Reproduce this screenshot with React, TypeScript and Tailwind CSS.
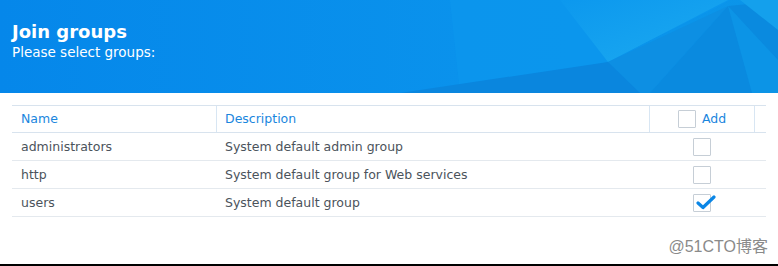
import React from 'react';

interface Group {
  name: string;
  description: string;
  checked: boolean;
}

const GROUPS: Group[] = [
  { name: 'administrators', description: 'System default admin group', checked: false },
  { name: 'http', description: 'System default group for Web services', checked: false },
  { name: 'users', description: 'System default group', checked: true },
];

const COLS = 'grid grid-cols-[204px_433px_106px_16px]';

// background art for the banner
const BannerArt: React.FC = () => (
  <svg className="absolute inset-0" width="778" height="93" viewBox="0 0 778 93" preserveAspectRatio="none">
    <defs>
      <linearGradient id="base" x1="0" y1="0" x2="1" y2="0">
        <stop offset="0" stopColor="#0587ea" />
        <stop offset="0.6" stopColor="#0a92ec" />
        <stop offset="1" stopColor="#0b95e9" />
      </linearGradient>
      <linearGradient id="light" x1="0" y1="0" x2="1" y2="1">
        <stop offset="0" stopColor="#0c98ee" />
        <stop offset="1" stopColor="#1caaf0" />
      </linearGradient>
    </defs>
    <rect width="778" height="93" fill="url(#base)" />
    <polygon points="450,0 730,0 720,6 610,60 560,93 460,93" fill="#0b97ee" opacity="0.7" />
    <polygon points="560,0 728,0 608,62" fill="url(#light)" />
    <polygon points="608,62 728,6 650,93 520,93" fill="#0d8fe3" />
    <polygon points="728,6 790,0 778,93 650,93" fill="#0a8adf" />
    <polygon points="728,6 778,60 778,93 752,93" fill="#0c94e6" />
    <polygon points="400,93 608,62 640,93" fill="#0a86de" />
    <polygon points="740,0 778,0 778,30" fill="#14a0ec" />
  </svg>
);

const Box: React.FC<{ checked?: boolean }> = ({ checked }) => (
  <span className="relative inline-block w-[18px] h-[18px] border border-[#c6ced6] bg-white rounded-[1px]">
    {checked && (
      <svg className="absolute left-[2px] top-[0px]" width="20" height="15" viewBox="0 0 20 15">
        <path d="M2 8 L7 12.5 L18 2" fill="none" stroke="#0a86e6" strokeWidth="3.2" strokeLinecap="round" strokeLinejoin="round" />
      </svg>
    )}
  </span>
);

const App: React.FC = () => {
  return (
    <div className="w-[778px] h-[266px] bg-white border-b-2 border-black font-['DejaVu_Sans',sans-serif] flex flex-col">
      <div className="relative h-[93px] shrink-0 overflow-hidden">
        <BannerArt />
        <div className="relative px-3 pt-[21px] text-white">
          <div className="text-[18px] font-bold leading-[22px]">Join groups</div>
          <div className="text-[13.5px] leading-[18px]">Please select groups:</div>
        </div>
      </div>

      <div className="mx-3 mt-3 text-[12.5px]">
        <div className={`${COLS} h-[28px] border-t border-b border-[#d8e3ee] text-[#1a86de]`}>
          <div className="flex items-center pl-[9px] pt-px">Name</div>
          <div className="flex items-center pl-[8px] pt-px border-l border-[#d8e6f3]">Description</div>
          <div className="flex items-center justify-center gap-[6px] border-l border-r border-[#d8e6f3]">
            <Box />
            <span>Add</span>
          </div>
          <div />
        </div>
        {GROUPS.map(g => (
          <div key={g.name} className={`${COLS} h-[28px] border-b border-[#e4e9ee] text-[#4b535b]`}>
            <div className="flex items-center pl-[9px] pt-px">{g.name}</div>
            <div className="flex items-center pl-[9px] pt-px">{g.description}</div>
            <div className="flex items-center justify-center">
              <Box checked={g.checked} />
            </div>
            <div />
          </div>
        ))}
      </div>

      <div className="mt-auto mb-[8px] pr-[10px] text-right text-[16px] leading-[18px] text-[#8a8a8a] font-['Liberation_Sans','Noto_Sans_CJK_SC',sans-serif]">
        @51CTO博客
      </div>
    </div>
  );
};

export default App;
